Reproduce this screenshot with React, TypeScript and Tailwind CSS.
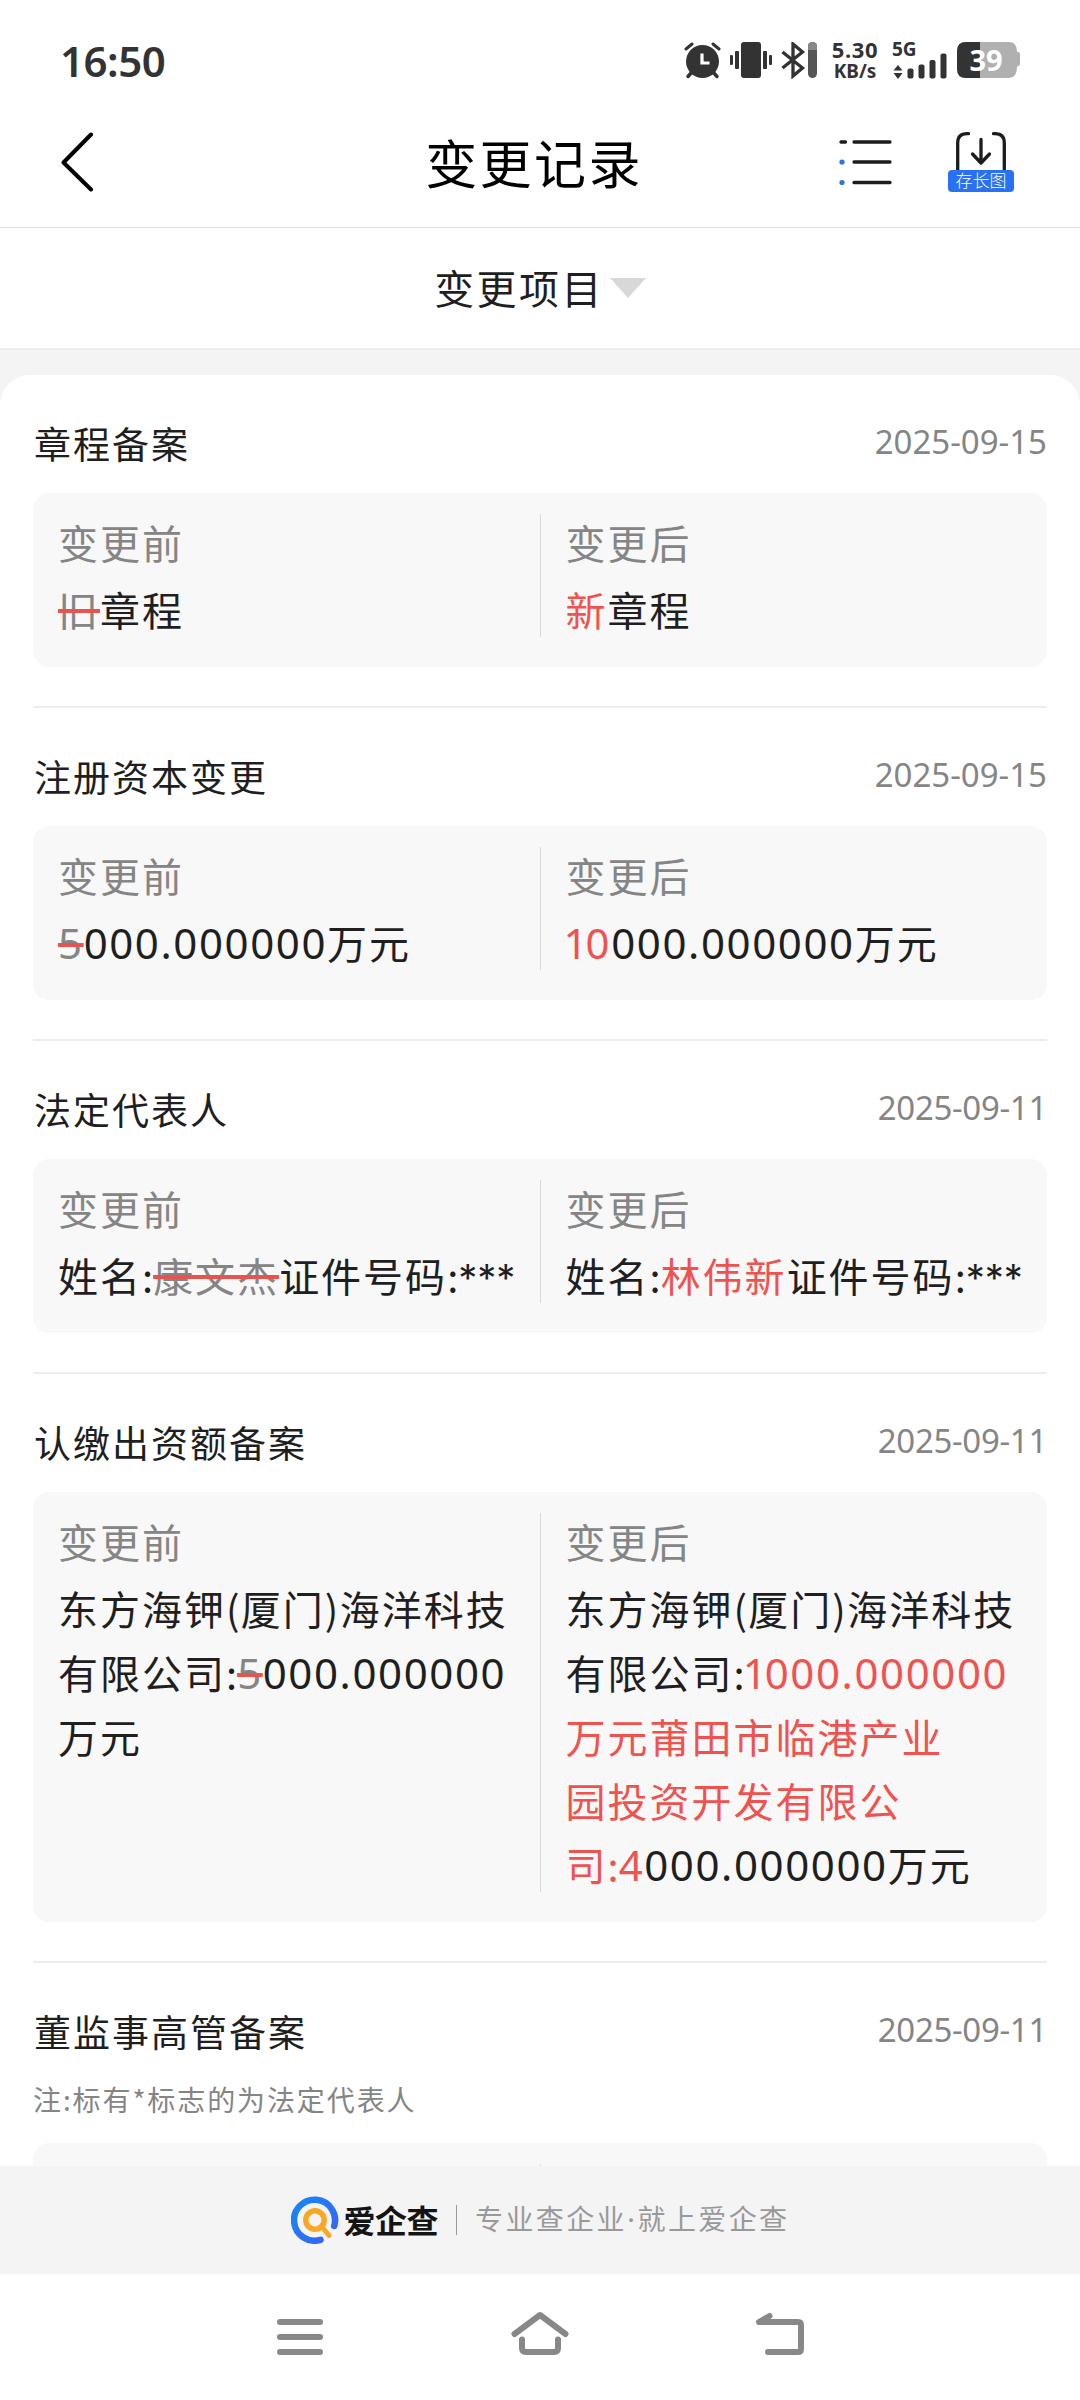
import { Fragment } from "react";

type Kind = "same" | "old" | "new";

interface Part {
  text: string;
  kind?: Kind;
}

interface ChangeRecord {
  title: string;
  date: string;
  note?: string;
  before: Part[][];
  after: Part[][];
}

const records: ChangeRecord[] = [
  {
    title: "章程备案",
    date: "2025-09-15",
    before: [[{ text: "旧", kind: "old" }, { text: "章程" }]],
    after: [[{ text: "新", kind: "new" }, { text: "章程" }]],
  },
  {
    title: "注册资本变更",
    date: "2025-09-15",
    before: [[{ text: "5", kind: "old" }, { text: "000.000000万元" }]],
    after: [[{ text: "10", kind: "new" }, { text: "000.000000万元" }]],
  },
  {
    title: "法定代表人",
    date: "2025-09-11",
    before: [[{ text: "姓名:" }, { text: "康文杰", kind: "old" }, { text: "证件号码:***" }]],
    after: [[{ text: "姓名:" }, { text: "林伟新", kind: "new" }, { text: "证件号码:***" }]],
  },
  {
    title: "认缴出资额备案",
    date: "2025-09-11",
    before: [
      [{ text: "东方海钾(厦门)海洋科技" }],
      [{ text: "有限公司:" }, { text: "5", kind: "old" }, { text: "000.000000" }],
      [{ text: "万元" }],
    ],
    after: [
      [{ text: "东方海钾(厦门)海洋科技" }],
      [{ text: "有限公司:" }, { text: "1000.000000", kind: "new" }],
      [{ text: "万元莆田市临港产业", kind: "new" }],
      [{ text: "园投资开发有限公", kind: "new" }],
      [{ text: "司:4", kind: "new" }, { text: "000.000000万元" }],
    ],
  },
  {
    title: "董监事高管备案",
    date: "2025-09-11",
    note: "注:标有*标志的为法定代表人",
    before: [],
    after: [],
  },
];

const kindClass: Record<Kind, string> = {
  same: "text-[#1f1f1f]",
  old: "text-[#858585] line-through decoration-[#e8534f] decoration-[4px]",
  new: "text-[#ee5350]",
};

// digits are a bit larger than the hanzi, punctuation has its own tracking
const Mixed = ({ text }: { text: string }) => (
  <>
    {text.split(/(1|[02-9.]+|:|\*+|[()])/).map((run, key) => {
      if (run === "1")
        return (
          <span key={key} className="-ml-[2px] font-['Noto_Sans'] text-[42px] leading-none tracking-[-2px]">
            1
          </span>
        );
      if (/^[\d.]/.test(run))
        return (
          <span key={key} className="font-['Noto_Sans'] text-[42px] leading-none tracking-[1.6px]">
            {run}
          </span>
        );
      if (run === ":")
        return (
          <span key={key} className="tracking-normal">
            :
          </span>
        );
      if (/^\*/.test(run))
        return (
          <span key={key} className="font-['Inter'] text-[38px] leading-none tracking-normal">
            {run}
          </span>
        );
      if (/^[()]/.test(run))
        return (
          <span key={key} className="tracking-[1.3px]">
            {run}
          </span>
        );
      return <Fragment key={key}>{run}</Fragment>;
    })}
  </>
);

const Column = ({ label, lines }: { label: string; lines: Part[][] }) => (
  <div className="min-h-[174px] flex-1 pt-[21px] pb-[25px] pl-[25px] text-[40px] tracking-[2px] whitespace-nowrap">
    {lines.length > 0 && <div className="h-[64px] leading-[57px] text-[#858585]">{label}</div>}
    {lines.map((line, key) => (
      <div key={key} className="h-[64px] leading-[62px]">
        {line.map((part, i) => (
          <span key={i} className={kindClass[part.kind ?? "same"]}>
            <Mixed text={part.text} />
          </span>
        ))}
      </div>
    ))}
  </div>
);

const Record = ({ record }: { record: ChangeRecord }) => (
  <section className="mx-[33px] border-b-2 border-[#ededed] pb-[39px]">
    <div className="flex h-[118px] items-start justify-between pt-[40px]">
      <h2 className="pl-px text-[37px] leading-[56px] tracking-[2px] text-[#1f1f1f]">{record.title}</h2>
      <span
        className={`font-['Noto_Sans'] text-[33px] leading-[54px] text-[#858585] ${
          record.date.endsWith("11") ? "tracking-[-0.3px]" : ""
        }`}
      >
        {record.date}
      </span>
    </div>
    {record.note && (
      <p className="-mt-[1px] h-[63px] text-[28px] leading-[38px] tracking-[1.9px] text-[#858585]">{record.note}</p>
    )}
    <div className="flex rounded-[16px] bg-[#f8f8f8]">
      <Column label="变更前" lines={record.before} />
      <div className="mt-[21px] mb-[30px] w-px bg-[#d8d8d8]" />
      <Column label="变更后" lines={record.after} />
    </div>
  </section>
);

const StatusBar = () => (
  <div className="flex h-[100px] shrink-0 items-start justify-between pt-[42px] pr-[60px] pl-[60px] font-['Noto_Sans'] text-[#333]">
    <span className="text-[42px] leading-[38px] font-semibold tracking-[-0.5px]">16:50</span>
    <div className="flex items-start">
      <svg width="38" height="37" viewBox="0 0 38 37" fill="none" stroke="#333" strokeLinecap="round">
        <circle cx="18.5" cy="19.5" r="16.5" fill="#333" stroke="none" />
        <path d="M2 7l6-5M35 7l-6-5" strokeWidth="3" />
        <path d="M8 30l-4 4.500M29 30l4 4.500" strokeWidth="3.500" />
        <path d="M18 11.500v9.500h7.500" stroke="#fff" strokeWidth="3.200" strokeLinecap="butt" />
      </svg>
      <svg className="ml-[8px]" width="42" height="37" viewBox="0 0 42 37" fill="#333">
        <rect x="11" y="0" width="20" height="36" rx="3" />
        <rect x="5" y="9" width="4" height="18" rx="1" />
        <rect x="33" y="9" width="4" height="18" rx="1" />
        <rect x="0" y="13" width="3" height="10" rx="1" />
        <rect x="39" y="13" width="3" height="10" rx="1" />
      </svg>
      <svg className="ml-[9px]" width="36" height="37" viewBox="0 0 36 37" fill="none">
        <path d="M1.500 10l20 16-9.500 8V2l9.500 8-20 16" stroke="#333" strokeWidth="3.300" />
        <rect x="27" y="0" width="9" height="36" rx="4.500" fill="#555" />
        <path d="M27 8V4.500a4.500 4.500 0 0 1 9 0V8z" fill="#888" />
      </svg>
      <div className="ml-[15px] flex w-[46px] flex-col items-center font-bold">
        <span className="h-[20px] text-[22px] leading-[15px] tracking-[0.6px]">5.30</span>
        <span className="text-[19px] leading-[18px]">KB/s</span>
      </div>
      <div className="ml-[15px] flex w-[55px] flex-col">
        <span className="-ml-px h-[13px] text-[19px] leading-[15px] font-bold">5G</span>
        <svg className="-mt-[2px]" width="55" height="26" viewBox="0 0 55 26" fill="#333">
          <path d="M5 12l4.500 5.500h-9zM5 26l4.500-6h-9z" />
          <rect x="14.500" y="15.500" width="6" height="10" rx="2" />
          <rect x="25.500" y="11.500" width="6" height="14" rx="2" />
          <rect x="36.500" y="7" width="6" height="18.500" rx="2" />
          <rect x="47.500" y="0.500" width="6" height="25" rx="2" />
        </svg>
      </div>
      <div className="relative ml-[9px] h-[36px] w-[63px]">
        <svg width="63" height="36" viewBox="0 0 63 36">
          <path d="M9 0h43q8 0 8 9.500q3 .5 3 3v9q0 2.500-3 3q0 11.500-8 11.500H9q-9 0-9-9V9q0-9 9-9z" fill="#b0b0b0" />
          <path d="M23 0H9Q0 0 0 9v18q0 9 9 9h14z" fill="#333" />
        </svg>
        <span className="absolute inset-x-0 top-0 pr-[5px] text-center text-[29px] leading-[36px] font-bold text-white">
          39
        </span>
      </div>
    </div>
  </div>
);

const Header = () => (
  <header className="flex h-[128px] shrink-0 items-center justify-between border-b border-[#e0e0e0] pr-[66px] pb-[3px] pl-[61px]">
    <svg width="142" height="60" viewBox="0 0 142 60" fill="none">
      <path d="M30 2.500L2.500 30.500L30 57.500" stroke="#000" strokeWidth="4" strokeLinecap="round" strokeLinejoin="round" />
    </svg>
    <h1 className="pl-[26px] text-[52px] leading-[60px] tracking-[2.4px] text-black">变更记录</h1>
    <div className="flex items-center">
      <svg width="54" height="46" viewBox="0 0 54 46" fill="none" strokeWidth="3.300" strokeLinecap="round">
        <path d="M2 3h4.500M15 3h36M15 23h36M15 43.500h36" stroke="#1c1c1c" />
        <circle cx="3" cy="23" r="2.600" fill="#2f6fe0" />
        <circle cx="3" cy="43.500" r="2.600" fill="#2f6fe0" />
      </svg>
      <div className="ml-[55px] flex w-[66px] flex-col items-center">
        <svg width="50" height="38" viewBox="0 0 50 38" fill="none" stroke="#1c1c1c" strokeWidth="3.300" strokeLinecap="round" strokeLinejoin="round">
          <path d="M1.700 40V11q0-9.300 9.300-9.300h1.500M48.300 40V11q0-9.300-9.300-9.300h-1.500" />
          <path d="M25 7.500v23.500M16.500 22l8.500 9l8.500-9" />
        </svg>
        <span className="h-[22px] w-[66px] rounded-[4px] bg-[#2970f2] text-center text-[17px] leading-[20px] font-light text-white">
          存长图
        </span>
      </div>
    </div>
  </header>
);

const Footer = () => (
  <footer className="flex h-[108px] shrink-0 items-center justify-center bg-[#f4f4f4]">
    <svg width="48" height="48" viewBox="0 0 48 48" fill="none" strokeLinecap="round">
      <defs>
        <linearGradient id="ring" x1="0" y1="0" x2="1" y2="1">
          <stop offset="0" stopColor="#1687fa" />
          <stop offset="1" stopColor="#3a62f0" />
        </linearGradient>
      </defs>
      <path d="M43.200 30A20.500 20.500 0 1 0 29.500 43.800" stroke="url(#ring)" strokeWidth="6.500" />
      <circle cx="24" cy="24" r="9.200" stroke="#f9a825" strokeWidth="5.500" />
      <path d="M31.500 31.500l6.500 8" stroke="#f9a825" strokeWidth="5" />
    </svg>
    <span className="ml-[5px] pb-[3px] text-[32px] leading-[40px] font-bold tracking-[-0.5px] text-[#141414]">爱企查</span>
    <div className="ml-[18px] h-[30px] w-px bg-[#999]" />
    <span className="ml-[18px] font-['Inter','Noto_Sans_CJK_SC',sans-serif] text-[28px] leading-[42px] tracking-[2.4px] text-[#999]">
      专业查企业·就上爱企查
    </span>
  </footer>
);

const NavBar = () => (
  <nav className="flex h-[126px] shrink-0 items-start justify-between px-[270px] pt-[36px]">
    <svg width="60" height="50" viewBox="0 0 60 50" fill="none" stroke="#888" strokeWidth="6" strokeLinecap="round">
      <path d="M10 12h40M10 27h40M10 42h40" />
    </svg>
    <svg width="60" height="50" viewBox="0 0 60 50" fill="none" stroke="#888" strokeWidth="6" strokeLinecap="round" strokeLinejoin="round">
      <path d="M4.500 24L30 5L55.500 24M12 29.500V38q0 4 4 4h28q4 0 4-4v-8.500" />
    </svg>
    <svg width="60" height="50" viewBox="0 0 60 50" fill="none" stroke="#888" strokeWidth="6" strokeLinecap="round" strokeLinejoin="round">
      <path d="M19.500 6L9 12H48q3 0 3 3V39q0 3-3 3H18" />
    </svg>
  </nav>
);

export default function App() {
  return (
    <div className="flex h-[2400px] w-[1080px] flex-col overflow-hidden bg-white font-['Noto_Sans_CJK_SC',sans-serif]">
      <StatusBar />
      <Header />
      <div className="flex h-[122px] shrink-0 items-center justify-center border-b-2 border-[#ececec]">
        <span className="pb-[2px] text-[40px] leading-[60px] tracking-[2.4px] text-[#1f1f1f]">变更项目</span>
        <svg className="ml-[6px]" width="36" height="20" viewBox="0 0 36 20" fill="#d8d8d8">
          <path d="M0 0h36L18 20z" />
        </svg>
      </div>
      <main className="min-h-0 flex-1 overflow-hidden bg-[#f4f4f4] pt-[25px]">
        <div className="rounded-t-[30px] bg-white">
          {records.map((record) => (
            <Record key={record.title} record={record} />
          ))}
        </div>
      </main>
      <Footer />
      <NavBar />
    </div>
  );
}
